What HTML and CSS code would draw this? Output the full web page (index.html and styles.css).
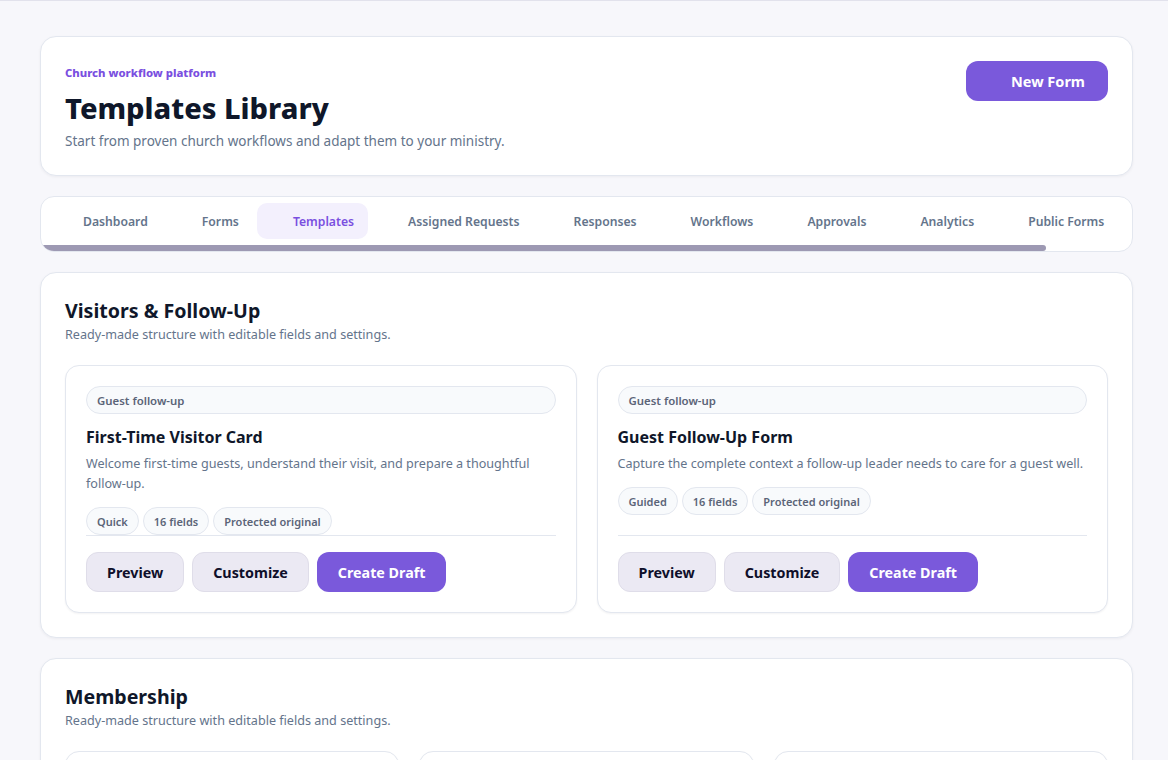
FILE: index.html
```html
<!DOCTYPE html>
<html lang="en">
<head>
    <meta charset="UTF-8">
    <meta name="viewport" content="width=device-width, initial-scale=1.0">
    <title>Templates Library</title>
    <link rel="stylesheet" href="styles.css">
</head>
<body>

    <div class="page">

        <!-- header -->
        <header class="page-header">
            <div class="page-heading">
                <p class="eyebrow">Church workflow platform</p>
                <h1>Templates Library</h1>
                <p class="lead">Start from proven church workflows and adapt them to your ministry.</p>
            </div>
            <button class="btn btn-primary btn-icon"><span class="icon"></span>New Form</button>
        </header>

        <!-- tabs -->
        <nav class="tabs">
            <a class="tab" href="#"><span class="icon"></span>Dashboard</a>
            <a class="tab" href="#"><span class="icon"></span>Forms</a>
            <a class="tab active" href="#"><span class="icon"></span>Templates</a>
            <a class="tab" href="#"><span class="icon"></span>Assigned Requests</a>
            <a class="tab" href="#"><span class="icon"></span>Responses</a>
            <a class="tab" href="#"><span class="icon"></span>Workflows</a>
            <a class="tab" href="#"><span class="icon"></span>Approvals</a>
            <a class="tab" href="#"><span class="icon"></span>Analytics</a>
            <a class="tab" href="#"><span class="icon"></span>Public Forms</a>
        </nav>

        <!-- Visitors -->
        <section class="section">
            <h2>Visitors &amp; Follow-Up</h2>
            <p class="section-sub">Ready-made structure with editable fields and settings.</p>

            <div class="template-grid cols-2">
                <div class="template-card">
                    <span class="pill pill-wide">Guest follow-up</span>
                    <h3>First-Time Visitor Card</h3>
                    <p class="template-desc">Welcome first-time guests, understand their visit, and prepare a thoughtful follow-up.</p>
                    <div class="tag-row">
                        <span class="pill">Quick</span>
                        <span class="pill">16 fields</span>
                        <span class="pill">Protected original</span>
                    </div>
                    <div class="card-actions">
                        <button class="btn btn-soft">Preview</button>
                        <button class="btn btn-soft">Customize</button>
                        <button class="btn btn-primary">Create Draft</button>
                    </div>
                </div>

                <div class="template-card">
                    <span class="pill pill-wide">Guest follow-up</span>
                    <h3>Guest Follow-Up Form</h3>
                    <p class="template-desc">Capture the complete context a follow-up leader needs to care for a guest well.</p>
                    <div class="tag-row">
                        <span class="pill">Guided</span>
                        <span class="pill">16 fields</span>
                        <span class="pill">Protected original</span>
                    </div>
                    <div class="card-actions">
                        <button class="btn btn-soft">Preview</button>
                        <button class="btn btn-soft">Customize</button>
                        <button class="btn btn-primary">Create Draft</button>
                    </div>
                </div>
            </div>
        </section>

        <!-- Membership -->
        <section class="section">
            <h2>Membership</h2>
            <p class="section-sub">Ready-made structure with editable fields and settings.</p>

            <div class="template-grid cols-3">
                <div class="template-card">
                    <span class="pill pill-wide">Membership</span>
                    <h3>Membership Application</h3>
                    <p class="template-desc">Collect the details needed to welcome a new member into the church family.</p>
                    <div class="tag-row">
                        <span class="pill">Guided</span>
                        <span class="pill">18 fields</span>
                    </div>
                    <div class="card-actions">
                        <button class="btn btn-soft">Preview</button>
                        <button class="btn btn-primary">Create Draft</button>
                    </div>
                </div>
                <div class="template-card">
                    <span class="pill pill-wide">Membership</span>
                    <h3>Membership Class Signup</h3>
                    <p class="template-desc">Register people for the next membership class and track attendance.</p>
                    <div class="tag-row">
                        <span class="pill">Quick</span>
                        <span class="pill">9 fields</span>
                    </div>
                    <div class="card-actions">
                        <button class="btn btn-soft">Preview</button>
                        <button class="btn btn-primary">Create Draft</button>
                    </div>
                </div>
                <div class="template-card">
                    <span class="pill pill-wide">Membership</span>
                    <h3>Member Info Update</h3>
                    <p class="template-desc">Let members keep their contact and household details up to date.</p>
                    <div class="tag-row">
                        <span class="pill">Quick</span>
                        <span class="pill">12 fields</span>
                    </div>
                    <div class="card-actions">
                        <button class="btn btn-soft">Preview</button>
                        <button class="btn btn-primary">Create Draft</button>
                    </div>
                </div>
            </div>
        </section>

    </div>

</body>
</html>
```

FILE: styles.css
```css
/* --- base --- */
* {
    box-sizing: border-box;
}

body {
    margin: 0;
    font-family: 'Noto Sans', 'Open Sans', sans-serif;
    background-color: #f7f7fb;
    color: #0f172a;
    border-top: 1px solid #e2e2ec;
}

.page {
    display: flex;
    flex-direction: column;
    gap: 20px;
    padding: 35px 35px 40px 40px;
}

h1, h2, h3, p {
    margin: 0;
}

/* --- header --- */
.page-header {
    display: flex;
    justify-content: space-between;
    align-items: flex-start;
    background-color: #ffffff;
    border: 1px solid #e3e7ef;
    border-radius: 16px;
    padding: 24px;
    box-shadow: 0 1px 3px rgba(15, 23, 42, 0.05);
}

.eyebrow {
    margin-top: 4px;
    font-size: 11.3px;
    line-height: 16px;
    font-weight: 800;
    color: #7a4fe0;
}

h1 {
    margin-top: 8px;
    font-size: 29px;
    line-height: 38px;
    font-weight: 800;
    color: #0f172a;
}

.lead {
    margin-top: 4px;
    font-size: 13.5px;
    line-height: 20px;
    color: #64748b;
}

/* --- buttons --- */
.btn {
    display: inline-flex;
    align-items: center;
    height: 40px;
    padding: 0 20px;
    border-radius: 12px;
    border: 1px solid transparent;
    font-family: inherit;
    font-size: 14.5px;
    font-weight: 700;
    cursor: pointer;
}

.btn-primary {
    background-color: #7a59db;
    color: #ffffff;
}

.btn-soft {
    background-color: #ebe9f3;
    border-color: #dfdde9;
    color: #0f0f2a;
}

.btn-icon {
    padding: 0 22px 0 20px;
}

.icon {
    display: inline-block;
    width: 16px;
    height: 16px;
    margin-right: 8px;
    flex-shrink: 0;
}

.tabs {
    position: relative;
    display: flex;
    gap: 4px;
    background-color: #ffffff;
    border: 1px solid #e3e7ef;
    border-radius: 14px;
    padding: 6px 6px 12px 6px;
    overflow: hidden;
}

.tabs::after {
    content: "";
    position: absolute;
    left: 0;
    bottom: 0;
    width: 92.1%;
    height: 6px;
    border-radius: 3px;
    background-color: #9d99b3;
}

.tab {
    display: flex;
    align-items: center;
    flex-shrink: 0;
    height: 36px;
    padding: 0 14px 0 12px;
    border-radius: 10px;
    font-size: 12.2px;
    font-weight: 600;
    color: #64748b;
    text-decoration: none;
    white-space: nowrap;
}

.tab.active {
    background-color: #f3f0fd;
    color: #7a4fe0;
}

/* --- sections --- */
.section {
    background-color: #ffffff;
    border: 1px solid #e3e7ef;
    border-radius: 16px;
    padding: 24px;
    box-shadow: 0 1px 3px rgba(15, 23, 42, 0.05);
}

h2 {
    font-size: 19.6px;
    line-height: 28px;
    font-weight: 700;
    color: #0f172a;
}

.section-sub {
    font-size: 12.6px;
    line-height: 20px;
    color: #64748b;
}

.template-grid {
    display: grid;
    gap: 20px;
    margin-top: 20px;
}

.cols-2 {
    grid-template-columns: repeat(2, 1fr);
}

.cols-3 {
    grid-template-columns: repeat(3, 1fr);
}

.template-card {
    display: flex;
    flex-direction: column;
    align-items: flex-start;
    border: 1px solid #e3e7ef;
    border-radius: 14px;
    padding: 20px;
    background-color: #ffffff;
    box-shadow: 0 1px 2px rgba(15, 23, 42, 0.05);
}

h3 {
    margin-top: 12px;
    font-size: 16px;
    line-height: 22px;
    font-weight: 700;
    color: #0f172a;
}

.template-desc {
    margin-top: 6px;
    font-size: 12.6px;
    line-height: 20px;
    color: #64748b;
}

.pill {
    display: inline-block;
    padding: 5.5px 10px;
    border: 1px solid #e3e7ef;
    border-radius: 999px;
    background-color: #f8fafc;
    font-size: 11px;
    line-height: 15px;
    font-weight: 600;
    color: #5b6478;
    white-space: nowrap;
}

.pill-wide {
    align-self: stretch;
    font-size: 11.4px;
}

.tag-row {
    display: flex;
    flex-wrap: wrap;
    gap: 4px;
    margin-top: 13px;
}

.card-actions {
    display: flex;
    gap: 8px;
    align-self: stretch;
    margin-top: auto;
    padding-top: 16px;
    border-top: 1px solid #e3e7ef;
}

.card-actions .btn {
    font-size: 14.3px;
}
```
